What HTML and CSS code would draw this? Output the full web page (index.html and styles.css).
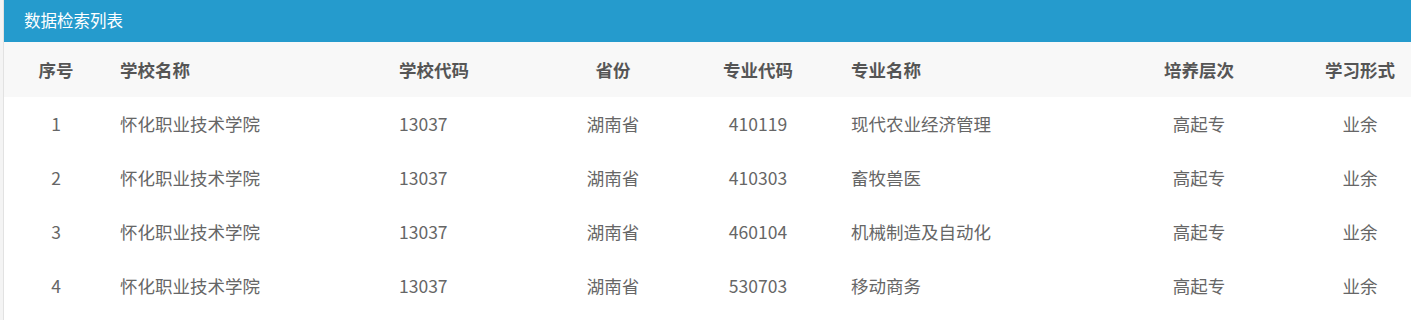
FILE: index.html
```html
<!DOCTYPE html>
<html lang="zh-CN">
<head>
<meta charset="utf-8">
<title>数据检索列表</title>
<link rel="stylesheet" href="styles.css">
</head>
<body>
<div class="panel">
  <div class="panel-title">数据检索列表</div>
  <div class="grid head">
    <div class="c center">序号</div>
    <div class="c left">学校名称</div>
    <div class="c left">学校代码</div>
    <div class="c center">省份</div>
    <div class="c center">专业代码</div>
    <div class="c left">专业名称</div>
    <div class="c center">培养层次</div>
    <div class="c center">学习形式</div>
  </div>
  <div class="grid row">
    <div class="c center">1</div>
    <div class="c left">怀化职业技术学院</div>
    <div class="c left">13037</div>
    <div class="c center">湖南省</div>
    <div class="c center">410119</div>
    <div class="c left">现代农业经济管理</div>
    <div class="c center">高起专</div>
    <div class="c center">业余</div>
  </div>
  <div class="grid row">
    <div class="c center">2</div>
    <div class="c left">怀化职业技术学院</div>
    <div class="c left">13037</div>
    <div class="c center">湖南省</div>
    <div class="c center">410303</div>
    <div class="c left">畜牧兽医</div>
    <div class="c center">高起专</div>
    <div class="c center">业余</div>
  </div>
  <div class="grid row">
    <div class="c center">3</div>
    <div class="c left">怀化职业技术学院</div>
    <div class="c left">13037</div>
    <div class="c center">湖南省</div>
    <div class="c center">460104</div>
    <div class="c left">机械制造及自动化</div>
    <div class="c center">高起专</div>
    <div class="c center">业余</div>
  </div>
  <div class="grid row">
    <div class="c center">4</div>
    <div class="c left">怀化职业技术学院</div>
    <div class="c left">13037</div>
    <div class="c center">湖南省</div>
    <div class="c center">530703</div>
    <div class="c left">移动商务</div>
    <div class="c center">高起专</div>
    <div class="c center">业余</div>
  </div>
</div>
</body>
</html>
```

FILE: styles.css
```css
html, body {
  margin: 0;
  padding: 0;
  background: #f4f4f4;
}
body {
  font-family: "Noto Sans CJK SC", "Noto Sans", sans-serif;
  padding-left: 3px;
}
.panel {
  border-left: 1px solid #e2e2e2;
  background: #fff;
  min-height: 320px;
}
.panel-title {
  height: 42px;
  line-height: 40px;
  background: #259bcd;
  color: #fff;
  font-size: 16.5px;
  padding-left: 20px;
}
.grid {
  display: grid;
  grid-template-columns: 104px 279px 162px 128px 162px 250px 220px 102px;
  align-items: center;
}
.head {
  height: 55px;
  background: #f8f8f8;
  color: #555;
  font-weight: bold;
  font-size: 17.5px;
}
.row {
  height: 54px;
  color: #666;
  font-size: 17.5px;
  padding-bottom: 2px;
  box-sizing: border-box;
}
.c {
  white-space: nowrap;
}
.left {
  text-align: left;
  padding-left: 12px;
}
.center {
  text-align: center;
}
```
